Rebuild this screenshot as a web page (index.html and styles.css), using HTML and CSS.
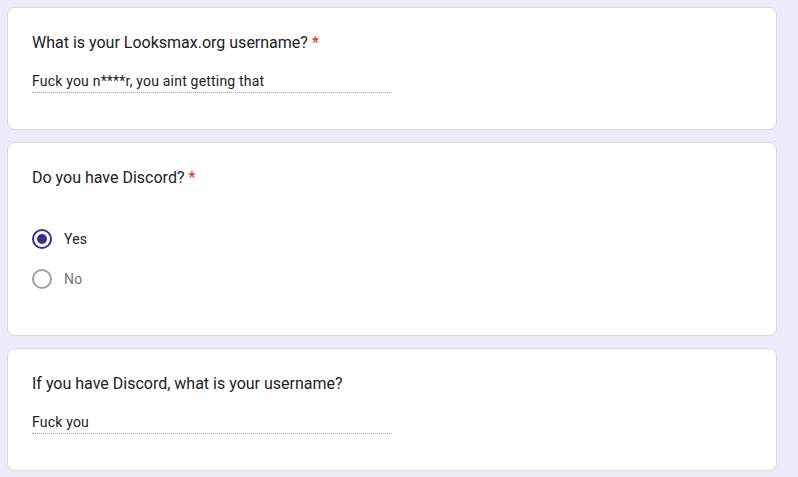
FILE: index.html
```html
<!DOCTYPE html>
<html lang="en">
<head>
    <meta charset="UTF-8">
    <meta name="viewport" content="width=device-width, initial-scale=1.0">
    <title>Form response</title>
    <link rel="stylesheet" href="styles.css">
</head>
<body>
    <div class="form">
        <div class="card">
            <div class="question">What is your Looksmax.org username? <span class="required">*</span></div>
            <div class="answer">Fuck you n****r, you aint getting that</div>
        </div>

        <div class="card">
            <div class="question">Do you have Discord? <span class="required">*</span></div>
            <div class="options">
                <div class="option checked">
                    <span class="radio"></span>
                    <span class="label">Yes</span>
                </div>
                <div class="option">
                    <span class="radio"></span>
                    <span class="label">No</span>
                </div>
            </div>
        </div>

        <div class="card">
            <div class="question">If you have Discord, what is your username?</div>
            <div class="answer">Fuck you</div>
        </div>
    </div>
</body>
</html>
```
FILE: styles.css
```css
body {
    margin: 0;
    padding: 7px 21px 7px 7px;
    background: #edebf9;
    font-family: Roboto, "Liberation Sans", Arial, sans-serif;
    color: #202124;
}
.form {
    width: 770px;
}
.card {
    background: #fff;
    border: 1px solid #dadce0;
    border-radius: 8px;
    padding: 23px 24px 36px;
    margin-bottom: 12px;
}
.question {
    font-size: 16px;
    line-height: 24px;
}
.required {
    color: #d93025;
}
.answer {
    width: 360px;
    margin-top: 16px;
    padding-bottom: 1px;
    font-size: 14px;
    line-height: 20px;
    letter-spacing: 0.2px;
    border-bottom: 1px dotted #9e9e9e;
}
.options {
    margin-top: 29px;
}
.option {
    display: flex;
    align-items: center;
    height: 40px;
}
.radio {
    box-sizing: border-box;
    width: 20px;
    height: 20px;
    border: 2px solid #9aa0a6;
    border-radius: 50%;
    display: flex;
    align-items: center;
    justify-content: center;
    margin-right: 12px;
}
.label {
    font-size: 14px;
    letter-spacing: 0.2px;
    color: #70757a;
}
.option.checked .radio {
    border-color: #3b2e8c;
}
.option.checked .radio::after {
    content: "";
    width: 10px;
    height: 10px;
    border-radius: 50%;
    background: #3b2e8c;
}
.option.checked .label {
    color: #202124;
}
```
